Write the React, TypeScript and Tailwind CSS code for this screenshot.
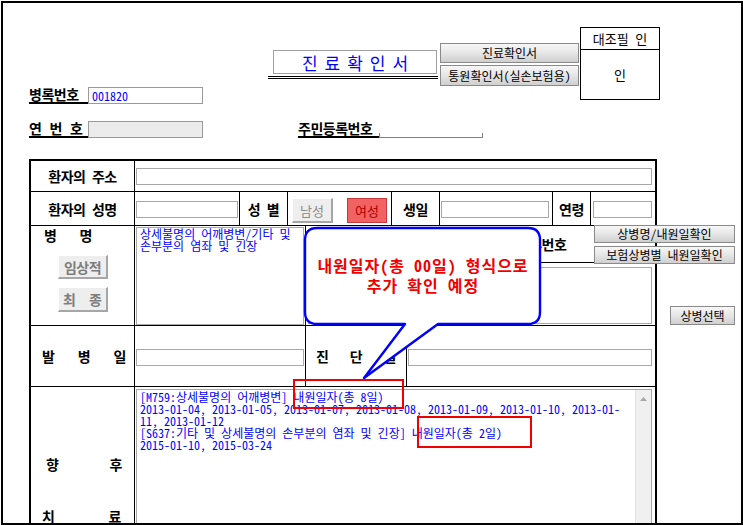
import React from "react";

const K = "font-['Noto_Sans_Mono_CJK_KR','Noto_Sans_CJK_KR',sans-serif]";
const inp = "border border-[#a8a8a8] bg-white";
const lbl = "text-[14px] font-bold leading-none tracking-[-0.5px]";
const gradBtn =
  "bg-linear-to-b from-[#f7f7f7] via-[#e6e6e6] to-[#cfcfcf] border border-[#8a8a8a] text-[12px] leading-none text-black flex items-center justify-center";
const btn3d =
  "bg-[#eeeeee] border-t border-l border-t-white border-l-white border-r-2 border-b-2 border-r-[#a6a6a6] border-b-[#a6a6a6] flex items-center text-[14px] font-bold text-[#7d7d7d] leading-none";

function Header() {
  return (
    <>
      <div className="flex items-start">
        <div className="ml-[26px] mt-[84px] flex">
          <div className="w-[59px] h-[17px] border-b-2 border-black text-[14px] font-bold leading-[15px] tracking-[-0.5px] text-black">
            병록번호
          </div>
          <div className="w-[115px] h-[17px] border border-[#9a9a9a] bg-white text-[12px] leading-[15px] text-[#0000ff] pl-[3px]">
            001820
          </div>
        </div>
        <div className="ml-[65px] mt-[47px] w-[170px]">
          <div className="ml-[5px] w-[164px] h-[24px] border border-[#a0a0a0] flex items-center justify-center text-[17px] text-[#0000ff] tracking-[7px] pl-[7px] leading-none">
            진료확인서
          </div>
          <div className="mt-[2px] h-[3px] border-y border-black" />
        </div>
        <div className="ml-[2px] mt-[40px] w-[139px] flex flex-col">
          <div className={`h-[20px] ${gradBtn}`}>진료확인서</div>
          <div className={`mt-[2px] h-[21px] ${gradBtn}`}>통원확인서(실손보험용)</div>
        </div>
        <div className="ml-[1px] mt-[24px] w-[80px] h-[73px] border border-black flex flex-col">
          <div className="h-[22px] border-b border-black flex items-center justify-center text-[13px] text-black leading-none">
            대조필 인
          </div>
          <div className="flex-1 flex items-center justify-center text-[13px] text-black leading-none">인</div>
        </div>
      </div>
      <div className="flex items-end mt-[17px] ml-[26px]">
        <div className="w-[59px] h-[17px] border-b-2 border-black text-[14px] font-bold leading-[15px] text-black flex justify-between pr-[5px]">
          <span>연</span>
          <span>번</span>
          <span>호</span>
        </div>
        <div className="w-[115px] h-[17px] border border-[#9a9a9a] bg-[#ececec]" />
        <div className="ml-[95px] w-[81px] h-[17px] border-b-2 border-black text-[14px] font-bold leading-[15px] tracking-[-0.5px] text-black whitespace-nowrap">
          주민등록번호
        </div>
        <div className="w-[104px] h-[5px] border-b border-x border-[#808080]" />
      </div>
    </>
  );
}

function Table() {
  return (
    <div className="ml-[26px] w-[628px] shrink-0 border-2 border-black text-black">
      {/* row 1 */}
      <div className="flex h-[31px] border-b border-black">
        <div className={`w-[104px] shrink-0 border-r border-black flex items-center justify-center ${lbl}`}>
          환자의 주소
        </div>
        <div className="flex-1 flex items-center pl-[1px] pr-[3px]">
          <div className={`w-full h-[17px] ${inp}`} />
        </div>
      </div>
      {/* row 2 */}
      <div className="flex h-[34px] border-b border-black">
        <div className={`w-[104px] shrink-0 border-r border-black flex items-center justify-center ${lbl}`}>
          환자의 성명
        </div>
        <div className="w-[105px] shrink-0 border-r border-black flex items-center pl-[1px] pt-[1px]">
          <div className={`w-[102px] h-[17px] ${inp}`} />
        </div>
        <div className={`w-[48px] shrink-0 border-r border-black flex items-center justify-center ${lbl}`}>
          성 별
        </div>
        <div className="w-[104px] shrink-0 border-r border-black flex items-start pl-[4px] pt-[6px]">
          <div className="w-[41px] h-[25px] bg-[#eeeeee] border-t border-l border-t-white border-l-white border-r-2 border-b-2 border-r-[#a6a6a6] border-b-[#a6a6a6] flex items-center justify-center text-[13px] text-[#8a8a8a] leading-none">
            남성
          </div>
          <div className="ml-[14px] w-[40px] h-[25px] bg-[#f26262] border border-[#c43a3a] flex items-center justify-center text-[13px] text-[#a80000] leading-none">
            여성
          </div>
        </div>
        <div className={`w-[48px] shrink-0 border-r border-black flex items-center justify-center ${lbl}`}>
          생일
        </div>
        <div className="w-[113px] shrink-0 border-r border-black flex items-center pl-[1px] pt-[1px]">
          <div className={`w-[108px] h-[17px] ${inp}`} />
        </div>
        <div className={`w-[38px] shrink-0 border-r border-black flex items-center justify-center ${lbl}`}>
          연령
        </div>
        <div className="flex-1 flex items-center pl-[2px] pr-[3px] pt-[1px]">
          <div className={`w-full h-[17px] ${inp}`} />
        </div>
      </div>
      {/* row 3 */}
      <div className="flex h-[100px] border-b border-black">
        <div className="w-[104px] shrink-0 border-r border-black flex flex-col pt-[2px]">
          <div className={`ml-[13px] w-[48px] flex justify-between ${lbl} leading-[15px]`}>
            <span>병</span>
            <span>명</span>
          </div>
          <div className={`ml-[27px] mt-[13px] w-[50px] h-[24px] justify-center tracking-[-0.5px] ${btn3d}`}>임상적</div>
          <div className={`ml-[27px] mt-[8px] w-[50px] h-[25px] justify-between px-[4px] ${btn3d}`}>
            <span>최</span>
            <span>종</span>
          </div>
        </div>
        <div className="w-[171px] shrink-0 border-r border-black pl-[1px] pt-[1px]">
          <div className={`w-[168px] h-[98px] ${inp} pl-[3px] text-[12px] leading-[12px] text-[#0000ff] whitespace-pre`}>
            {"상세불명의 어깨병변/기타 및\n손부분의 염좌 및 긴장"}
          </div>
        </div>
        <div className="flex-1 flex flex-col">
          <div className={`h-[37px] border-b border-black flex items-center pl-[186px] ${lbl}`}>
            질병분류번호
          </div>
          <div className={`ml-[2px] mr-[3px] mt-[4px] h-[57px] ${inp}`} />
        </div>
      </div>
      {/* row 4 */}
      <div className="flex h-[61px] border-b border-black">
        <div className="w-[104px] shrink-0 border-r border-black flex items-center">
          <div className={`ml-[11px] w-[84px] flex justify-between ${lbl}`}>
            <span>발</span>
            <span>병</span>
            <span>일</span>
          </div>
        </div>
        <div className="w-[171px] shrink-0 border-r border-black flex items-start pl-[1px] pt-[23px]">
          <div className={`w-[168px] h-[17px] ${inp}`} />
        </div>
        <div className="w-[101px] shrink-0 border-r border-black flex items-center">
          <div className={`ml-[10px] w-[80px] flex justify-between ${lbl}`}>
            <span>진</span>
            <span>단</span>
            <span>일</span>
          </div>
        </div>
        <div className="flex-1 flex items-start pl-[1px] pr-[3px] pt-[23px]">
          <div className={`w-full h-[17px] ${inp}`} />
        </div>
      </div>
      {/* row 5 */}
      <div className="flex h-[200px]">
        <div className="w-[104px] shrink-0 border-r border-black flex flex-col pt-[70px]">
          <div className={`ml-[15px] w-[76px] flex justify-between ${lbl} leading-[15px]`}>
            <span>향</span>
            <span>후</span>
          </div>
          <div className={`ml-[11px] w-[79px] mt-[38px] flex justify-between ${lbl} leading-[15px]`}>
            <span>치</span>
            <span>료</span>
          </div>
        </div>
        <div className="flex-1 pl-[1px] pr-[3px] pt-[2px]">
          <div className={`w-full h-[190px] ${inp} flex`}>
            <div className="flex-1 pl-[3px] pt-[1px] text-[12px] leading-[12px] text-[#0000ff] whitespace-pre">
              {"[M759:상세불명의 어깨병변] 내원일자(총 8일)\n2013-01-04, 2013-01-05, 2013-01-07, 2013-01-08, 2013-01-09, 2013-01-10, 2013-01-\n11, 2013-01-12\n[S637:기타 및 상세불명의 손부분의 염좌 및 긴장] 내원일자(총 2일)\n2015-01-10, 2015-03-24"}
            </div>
            <div className="w-[16px] bg-[#f0f0f0] border-l border-[#e2e2e2] flex justify-center pt-[7px]">
              <svg width="7" height="4" viewBox="0 0 7 4">
                <path d="M0 4 L3.5 0 L7 4 Z" fill="#a8a8a8" />
              </svg>
            </div>
          </div>
        </div>
      </div>
    </div>
  );
}

function SideButtons() {
  return (
    <div className="relative z-10 -ml-[63px] mt-[66px] w-[141px] flex flex-col">
      <div className={`h-[18px] ${gradBtn}`}>상병명/내원일확인</div>
      <div className={`mt-[3px] h-[18px] ${gradBtn}`}>보험상병별 내원일확인</div>
      <div className={`ml-[76px] mt-[42px] w-[65px] h-[19px] ${gradBtn}`}>상병선택</div>
    </div>
  );
}

export default function App() {
  return (
    <div className={`w-[743px] h-[525px] bg-white pt-[1px] pl-[1px] ${K}`}>
      <div className="relative w-[742px] h-[524px] border-2 border-black overflow-hidden bg-white">
        <Header />
        <div className="flex items-start mt-[21px]">
          <Table />
          <SideButtons />
        </div>

        {/* callout bubble */}
        <svg
          className="absolute left-[297px] top-[221px] z-20"
          width="245"
          height="160"
          viewBox="0 0 245 160"
        >
          <path
            d="M17 4 H228 Q240 4 240 16 V88 Q240 100 228 100 H138 L64 154 L105 100 H17 Q5 100 5 88 V16 Q5 4 17 4 Z"
            fill="white"
            stroke="#0000ff"
            strokeWidth="2.4"
            strokeLinejoin="round"
          />
        </svg>
        <div className="absolute left-[302px] top-[252px] w-[236px] z-30 flex flex-col items-center text-[16px] leading-[20px] font-bold tracking-[1px] text-[#f00000] whitespace-pre">
          <div>내원일자(총 00일) 형식으로</div>
          <div>추가 확인 예정</div>
        </div>

        {/* red highlight boxes */}
        <div className="absolute left-[290px] top-[376px] w-[111px] h-[30px] border-2 border-[#f00000] z-20" />
        <div className="absolute left-[414px] top-[413px] w-[115px] h-[32px] border-2 border-[#f00000] z-20" />
      </div>
    </div>
  );
}
